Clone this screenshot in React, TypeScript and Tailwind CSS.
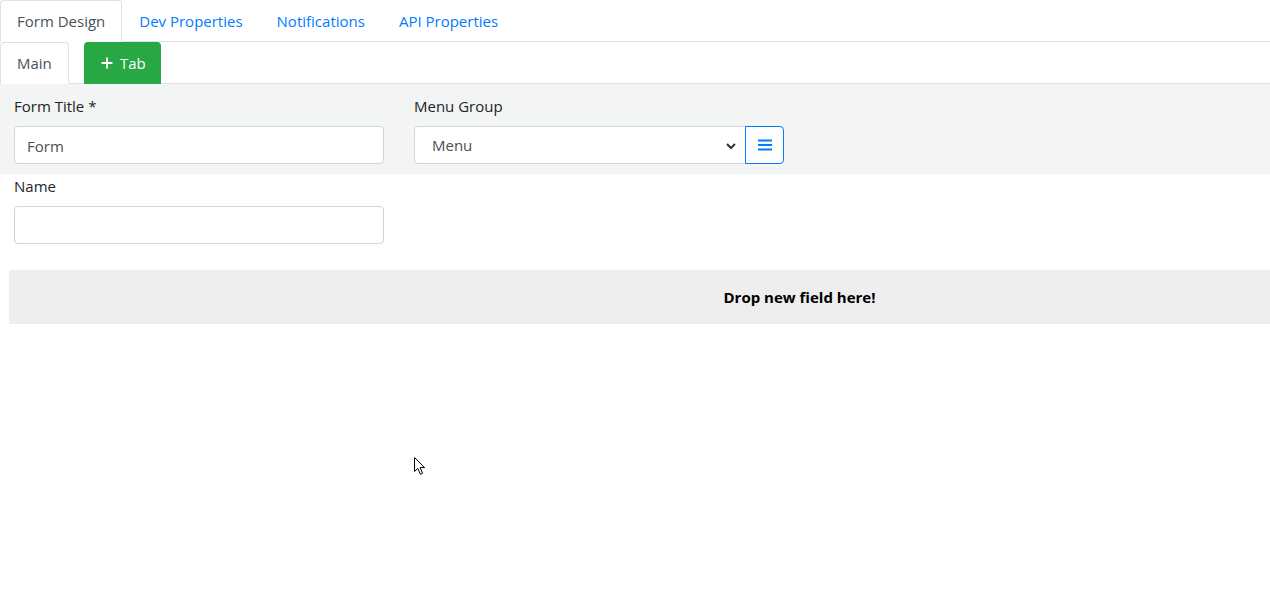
import { Plus } from "lucide-react";

const font = { fontFamily: '"Open Sans", "Noto Sans", sans-serif' };

function Cursor() {
  return (
    <svg className="absolute left-[413px] top-[456px]" width="14" height="20" viewBox="0 0 14 20">
      <path d="M1.5 1.5 L1.5 15.5 L4.8 12.4 L7.4 18.3 L9.6 17.3 L7.1 11.6 L11.6 11.6 Z" fill="#fff" stroke="#000" strokeWidth="1" strokeLinejoin="miter" />
    </svg>
  );
}

export default function App() {
  const tabs = ["Dev Properties", "Notifications", "API Properties"];
  return (
    <div className="relative w-[1270px] h-[616px] bg-white text-[15px] text-[#212529] overflow-hidden" style={font}>
      {/* Top tabs */}
      <div className="flex border-b border-[#dee2e6] h-[42px]">
        <div className="px-4 h-[42px] leading-[40px] border border-[#dee2e6] border-b-white rounded-t bg-white text-[#495057] -mb-px">
          Form Design
        </div>
        {tabs.map(t => (
          <div key={t} className="px-4 h-[42px] leading-[40px] border border-transparent text-[#007bff]">{t}</div>
        ))}
      </div>

      {/* Sub tabs */}
      <div className="flex items-end gap-[15px] border-b border-[#dee2e6] h-[42px]">
        <div className="px-4 h-[42px] leading-[40px] border border-[#dee2e6] border-b-transparent rounded-t bg-white text-[#495057] -mb-px">
          Main
        </div>
        <button className="flex items-center justify-center gap-[5px] w-[77px] h-[42px] -mb-px rounded-t bg-[#28a745] text-white">
          <Plus className="w-[16px] h-[16px]" strokeWidth={3} /> Tab
        </button>
      </div>

      {/* Gray section */}
      <div className="bg-[#f3f4f4] pt-[10px] pb-[10px] px-[14px] flex gap-[30px]">
        <div className="w-[370px]">
          <div className="leading-6 mb-2">Form Title *</div>
          <input
            defaultValue="Form"
            className="w-full h-[38px] px-3 pt-px border border-[#ced4da] rounded bg-white text-[#495057] outline-none"
            style={font}
          />
        </div>
        <div className="w-[370px]">
          <div className="leading-6 mb-2">Menu Group</div>
          <div className="flex h-[38px]">
            <div className="flex-1 flex items-center justify-between pl-[17px] pr-2 pt-px border border-[#ced4da] rounded-l bg-white text-[#495057]">
              <span>Menu</span>
              <svg width="12" height="12" viewBox="0 0 12 12">
                <path d="M2 4 L6 8 L10 4" fill="none" stroke="#333" strokeWidth="2" />
              </svg>
            </div>
            <button className="w-[39px] flex items-center justify-center border border-[#007bff] rounded-r bg-white -ml-px">
              <svg width="14" height="12" viewBox="0 0 14 12">
                <path d="M0 1.5 H14 M0 6 H14 M0 10.5 H14" stroke="#007bff" strokeWidth="2" />
              </svg>
            </button>
          </div>
        </div>
      </div>

      {/* Name */}
      <div className="px-[14px]">
        <div className="w-[370px]">
          <div className="leading-6 mb-2">Name</div>
          <input className="w-full h-[38px] px-3 border border-[#ced4da] rounded bg-white outline-none" />
        </div>
      </div>

      {/* Drop zone */}
      <div className="ml-[9px] mt-[26px] h-[54px] bg-[#eeeeee] flex items-center justify-center pl-[320px] font-bold text-black">
        Drop new field here!
      </div>

      <Cursor />
    </div>
  );
}
